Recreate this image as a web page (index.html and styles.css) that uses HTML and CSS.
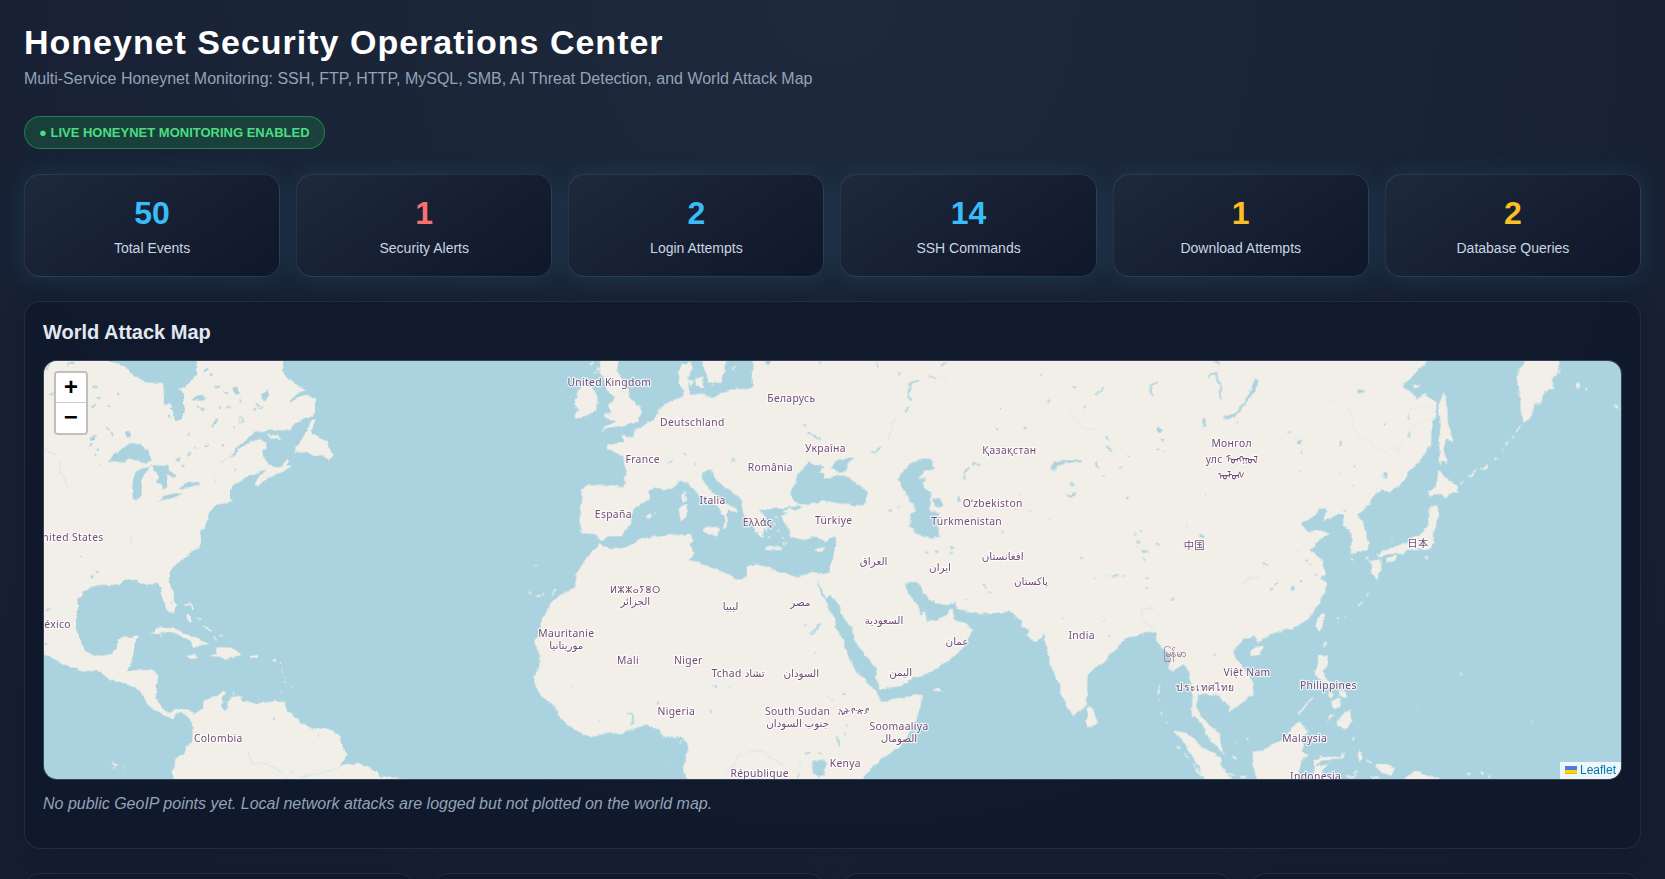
FILE: index.html
```html
<!DOCTYPE html>
<html lang="en">
<head>
<meta charset="utf-8">
<title>Honeynet Security Operations Center</title>
<link rel="stylesheet" href="styles.css">
</head>
<body>
<main class="page">
  <header class="masthead">
    <h1 class="title">Honeynet Security Operations Center</h1>
    <p class="subtitle">Multi-Service Honeynet Monitoring: SSH, FTP, HTTP, MySQL, SMB, AI Threat Detection, and World Attack Map</p>
    <div class="badge">● LIVE HONEYNET MONITORING ENABLED</div>
  </header>

  <section class="stats">
    <div class="card"><div class="value">50</div><div class="label">Total Events</div></div>
    <div class="card"><div class="value red">1</div><div class="label">Security Alerts</div></div>
    <div class="card"><div class="value">2</div><div class="label">Login Attempts</div></div>
    <div class="card"><div class="value">14</div><div class="label">SSH Commands</div></div>
    <div class="card"><div class="value amber">1</div><div class="label">Download Attempts</div></div>
    <div class="card"><div class="value amber">2</div><div class="label">Database Queries</div></div>
  </section>

  <section class="panel">
    <h2 class="panel-title">World Attack Map</h2>
    <div class="map">
      <svg class="world" viewBox="132 1083 4731 1254" preserveAspectRatio="xMidYMid slice" role="img" aria-label="World map">
        <defs>
          <filter id="coast" filterUnits="userSpaceOnUse" x="60" y="1020" width="4900" height="1400">
            <feTurbulence type="fractalNoise" baseFrequency="0.045" numOctaves="3" seed="4" result="n"/>
            <feDisplacementMap in="SourceGraphic" in2="n" scale="14" xChannelSelector="R" yChannelSelector="G"/>
          </filter>
        </defs>
        <g filter="url(#coast)">
          <!-- Americas -->
          <g transform="translate(0 1020)">
            <path class="land" d="M90,20 L318,20 L318,60 L345,68 L378,80 L400,105 L440,127 L490,132 L492,190 L510,205 L530,243 L545,238 L555,212 L548,160 L540,148 L570,130 L588,105 L590,20 L848,20 L850,95 L868,122 L918,150 L895,158 L870,182 L925,165 L945,180 L945,215 L930,232 L895,245 L870,270 L800,272 L762,275 L745,295 L715,320 L690,352 L735,318 L760,302 L785,297 L800,310 L795,325 L788,330 L795,360 L805,375 L830,382 L848,378 L855,360 L865,358 L862,375 L875,378 L850,395 L800,415 L778,438 L768,432 L772,410 L790,398 L795,385 L775,400 L725,420 L700,435 L690,450 L690,475 L700,483 L670,490 L640,500 L632,510 L625,540 L612,562 L600,572 L603,600 L598,625 L570,640 L550,655 L520,680 L507,700 L508,725 L522,770 L528,795 L522,820 L512,818 L492,795 L487,770 L483,745 L465,728 L440,735 L410,720 L370,722 L360,735 L300,735 L275,740 L250,758 L235,775 L237,800 L228,820 L228,870 L240,905 L260,935 L285,950 L335,942 L350,925 L353,900 L375,890 L413,890 L402,930 L395,965 L380,992 L450,990 L475,1005 L470,1040 L468,1075 L490,1105 L510,1118 L545,1102 L575,1112 L583,1125 L605,1105 L608,1085 L635,1072 L655,1065 L668,1055 L680,1056 L665,1072 L668,1090 L685,1085 L690,1072 L715,1068 L732,1085 L770,1090 L840,1082 L858,1100 L862,1115 L895,1140 L930,1165 L985,1165 L1020,1190 L1025,1220 L1043,1245 L1020,1275 L1070,1270 L1095,1278 L1130,1295 L1140,1308 L1215,1318 L1215,1360 L530,1360 L518,1300 L530,1255 L550,1245 L560,1220 L577,1205 L578,1160 L562,1130 L545,1115 L525,1125 L520,1140 L505,1130 L480,1120 L440,1090 L432,1070 L400,1040 L330,1020 L290,988 L250,995 L190,972 L150,950 L90,935 Z"/>
            <path class="land" d="M883,335 L905,300 L922,262 L935,240 L948,237 L935,270 L940,285 L980,300 L985,320 L998,345 L985,362 L970,345 L940,350 L930,340 Z M795,280 L830,288 L842,300 L820,297 Z M452,882 L470,865 L500,860 L530,868 L575,890 L628,912 L580,920 L570,905 L540,885 L500,875 Z M625,948 L655,940 L645,922 L690,922 L728,942 L715,950 L678,957 L660,950 Z M560,948 L578,945 L595,953 L575,957 Z M750,946 L775,946 L773,953 L750,953 Z M495,192 L510,190 L518,202 L505,203 Z M845,1084 L855,1082 L853,1092 L843,1092 Z M558,825 L566,822 L572,842 L566,846 Z M477,884 L485,882 L485,890 L477,890 Z"/>
            <path class="speck land-line" d="M550,795 l22,-3 8,14 M590,830 l10,10 M612,855 l20,18 M640,890 l10,8 M660,883 l12,4 M820,960 l8,4 M838,968 l2,3 M842,984 l4,4 M848,998 l2,2 M853,1012 l1,2 M854,1026 l-1,4 M845,1056 l1,2 M700,1060 l2,6 M722,1068 l4,2 M878,1038 l2,1 M335,1268 l18,10 M340,1282 l8,2 M368,1280 l3,1"/>
            <path class="water" d="M325,362 L370,322 L400,308 L422,312 L430,328 L445,332 L455,362 L440,368 L415,362 L385,355 L375,368 Z M405,400 L425,385 L452,382 L440,395 L425,420 L425,465 L410,484 L398,475 L396,435 Z M452,375 L500,378 L530,412 L515,412 L498,405 L502,440 L490,450 L485,430 L465,430 L478,410 L465,388 Z M475,485 L490,468 L520,460 L550,457 L520,475 Z M535,445 L555,430 L595,425 L595,438 L560,445 Z M378,275 L390,270 L393,290 L380,293 Z M668,1088 L682,1092 L683,1106 L673,1112 L666,1102 Z M784,160 L802,152 L812,166 L795,182 L782,172 Z M572,180 L600,164 L622,172 L600,182 Z M698,148 L716,142 L720,160 L704,164 Z M272,292 L288,288 L288,302 L274,306 Z"/>
            <path class="speck water-line" d="M150,70 l-12,18 M205,75 l18,-8 M150,160 l10,4 M165,120 l10,-5 M278,145 l14,-6 M290,170 l16,6 M325,195 l8,3 M350,160 l10,3 M275,200 l12,-6 M318,262 l10,8 M330,280 l6,4 M270,315 l10,0 M290,325 l6,4 M284,345 l5,4 M297,373 l2,2 M612,95 l14,-10 M630,100 l8,4 M645,140 l14,-4 M602,205 l12,3 M590,200 l8,3 M636,262 q5,-16 18,-22 M670,155 l14,4 M655,200 l8,2 M680,205 l10,-6 M716,180 l8,8 M770,190 l8,10 M760,210 l10,0 M780,205 l10,-4 M700,260 l4,3 M562,282 l8,4 M615,315 l8,2 M585,320 l6,4 M665,315 l6,3 M530,360 l10,-4 M560,345 l10,-8 M545,375 l8,6 M706,385 l2,6 M870,185 l30,-20 M515,785 l2,8 M820,1140 l8,-8 M955,1183 l3,3 M240,650 l6,2 M288,700 l8,-6 M275,714 l8,-4 M140,808 l14,0 M135,912 l8,0 M505,225 l6,5"/>
            <circle class="water-line" cx="724" cy="240" r="8"/>
            <path class="river" d="M132,325 L155,340 L168,338 M178,365 L184,400 L205,440 M650,377 L690,350 L715,322 M645,405 L646,430 M392,585 L394,610 M745,1235 L755,1270 L800,1272 L845,1295 L865,1318 M900,1312 L960,1300 L1010,1285 L1045,1255 M870,1290 l12,6"/>
          </g>
          <!-- Europe -->
          <g transform="translate(1560 1050)">
            <path class="land" d="M1320,-20 L705,-20 L698,60 L698,105 L680,118 L655,112 L620,125 L580,142 L550,130 L515,135 L505,105 L503,85 L515,60 L513,35 L485,42 L475,70 L475,100 L487,115 L488,140 L460,150 L430,160 L420,172 L415,190 L400,210 L365,225 L345,240 L340,258 L322,262 L306,256 L310,278 L290,280 L260,285 L262,300 L292,310 L310,325 L317,350 L315,395 L310,412 L250,407 L205,405 L182,418 L187,450 L178,510 L185,550 L225,552 L240,572 L265,562 L305,557 L325,530 L335,520 L330,500 L350,470 L390,450 L388,425 L405,412 L440,420 L465,410 L480,392 L505,398 L515,415 L545,440 L570,455 L595,475 L612,495 L617,515 L608,532 L615,534 L628,515 L618,492 L630,480 L652,490 L648,475 L615,460 L585,435 L560,405 L545,385 L548,365 L570,358 L580,380 L600,400 L640,430 L665,445 L672,490 L685,510 L700,530 L712,555 L730,562 L728,540 L745,535 L722,510 L738,500 L720,480 L745,475 L765,470 L790,475 L820,465 L790,484 L800,490 L785,500 L800,530 L815,560 L850,570 L880,558 L915,573 L945,558 L950,575 L940,620 L930,660 L960,680 L1320,680 Z"/>
            <path class="land" d="M240,10 L300,10 L290,60 L300,80 L325,115 L330,140 L345,165 L365,172 L360,195 L355,215 L320,225 L290,230 L265,232 L242,246 L265,222 L290,215 L260,205 L250,195 L270,190 L265,165 L278,155 L285,140 L265,125 L255,95 L240,70 Z M185,105 L215,110 L232,140 L232,180 L205,195 L170,205 L160,195 L178,180 L165,165 L170,130 Z M550,10 L622,10 L615,60 L605,95 L565,98 L560,70 L548,50 Z M525,85 L550,78 L548,112 L528,108 Z M505,92 L520,92 L518,106 L507,104 Z M475,470 L500,462 L500,500 L482,515 Z M483,435 L497,422 L498,450 L492,460 Z M550,535 L597,530 L592,560 L555,548 Z M376,500 L390,490 L396,500 L384,506 Z M738,588 L785,592 L780,600 L740,597 Z M887,598 L920,588 L905,605 L890,606 Z M574,100 L582,108 L576,110 Z M725,535 L745,548 L740,532 Z"/>
            <path class="speck land-line" d="M210,45 l10,-8 M222,70 l8,-6 M230,55 l8,6 M403,489 l6,2 M765,500 l8,3 M760,520 l6,4 M772,540 l8,4 M785,560 l6,4 M790,580 l6,6 M745,560 l6,4 M750,512 l6,-2 M800,577 l3,6 M640,60 l6,-14 M44,644 l4,1"/>
            <path class="water" d="M865,338 L835,370 L825,400 L808,430 L825,460 L870,465 L905,450 L960,460 L1010,468 L1045,455 L1047,430 L1020,405 L985,385 L955,372 L935,385 L915,385 L915,372 L895,362 L915,350 L890,345 Z M930,352 L945,335 L1005,320 L985,345 L985,358 L955,367 Z M802,470 L830,466 L848,470 L825,480 Z M735,30 L752,30 L748,44 L736,44 Z M1060,515 L1078,516 L1074,524 L1062,524 Z M1105,530 L1112,530 L1116,548 L1108,545 Z"/>
            <path class="speck water-line" d="M492,308 l8,4 M520,340 l8,3 M445,340 l10,-8 M632,332 l14,-6 M855,220 l2,8 M862,246 q20,10 40,25 M895,38 l8,1 M1072,36 l2,18 M1130,68 l14,4 M1105,270 l3,3 M1168,285 l4,4 M990,575 l5,4 M466,617 l20,0 M480,628 l14,0 M1070,610 l5,14 M1000,540 l8,-4"/>
          </g>
          <!-- Africa -->
          <g transform="translate(1560 1680)">
            <path class="land" d="M240,-50 L265,-37 L310,-35 L355,-60 L400,-72 L450,-75 L515,-78 L523,-60 L510,-50 L523,-20 L505,0 L530,5 L595,30 L625,45 L665,62 L680,50 L680,20 L710,10 L740,20 L770,35 L835,52 L870,40 L890,42 L892,60 L900,95 L925,140 L945,180 L950,210 L970,240 L985,290 L1005,330 L1040,365 L1070,395 L1085,425 L1130,415 L1208,402 L1205,440 L1170,510 L1140,560 L1080,600 L1025,657 L1015,700 L515,700 L488,625 L500,590 L505,550 L480,530 L435,532 L415,505 L370,495 L305,523 L265,518 L208,530 L165,510 L115,470 L105,440 L60,405 L50,380 L42,350 L62,310 L55,270 L45,245 L60,195 L80,150 L110,110 L165,85 L170,40 L195,0 L220,-30 Z"/>
            <path class="land" d="M870,38 L925,45 L950,-20 L1000,-20 L1000,150 L930,108 L915,112 L892,60 Z"/>
            <path class="speck land-line" d="M30,95 l2,8 M48,110 l12,-4 M66,105 l6,-2 M92,103 l12,-16 M448,602 l2,1 M482,548 l4,-6 M42,14 l5,1 M1242,388 l14,3"/>
            <path class="water" d="M880,605 L918,602 L915,640 L895,652 L878,640 Z M968,396 L977,397 L976,404 L967,403 Z"/>
            <path class="speck water-line" d="M950,530 l8,30 M858,582 l12,-10 M892,576 l14,4 M832,650 l5,-10 M838,612 l4,-4 M980,500 l4,-6 M975,520 l2,6 M580,381 l8,1 M626,382 l6,0 M570,452 l5,2 M922,408 l4,3 M935,420 l4,3 M870,222 l14,-12 10,-5 5,-15 M852,195 l8,1 M882,278 l6,2 M158,380 l3,1 M320,460 l18,6 2,24 -10,4 M238,483 l3,3 M413,426 l3,6 M940,38 l2,3"/>
            <path class="river" d="M612,645 L640,620 L655,585 L700,572 L725,572 L760,600 L790,612"/>
          </g>
          <!-- South Asia -->
          <g transform="translate(2460 1680)">
            <path class="land" d="M60,-120 L50,-60 L38,0 L30,35 L5,45 L25,100 L32,80 L30,106 L50,125 L72,175 L100,210 L105,245 L135,285 L165,320 L168,350 L178,390 L235,380 L280,355 L325,340 L380,305 L420,275 L440,245 L457,212 L440,190 L405,180 L397,145 L370,175 L320,184 L315,150 L305,165 L290,130 L265,100 L255,75 L275,65 L295,68 L310,100 L345,130 L385,135 L405,125 L412,150 L480,162 L570,155 L605,180 L610,205 L630,212 L615,222 L645,245 L665,235 L672,215 L678,260 L690,310 L715,370 L735,430 L758,467 L780,455 L800,430 L803,345 L820,325 L850,310 L890,265 L918,235 L960,225 L990,215 L1005,215 L1010,245 L1030,265 L1050,290 L1045,325 L1060,335 L1092,310 L1105,340 L1118,400 L1115,465 L1145,490 L1165,535 L1200,575 L1215,585 L1202,555 L1200,520 L1160,490 L1140,460 L1128,440 L1135,405 L1160,400 L1195,410 L1230,440 L1225,458 L1265,430 L1300,405 L1300,370 L1280,330 L1250,300 L1240,275 L1265,240 L1305,228 L1315,250 L1330,235 L1375,215 L1420,205 L1460,180 L1485,150 L1505,115 L1518,95 L1520,70 L1500,55 L1518,45 L1505,0 L1475,-30 L1400,-120 Z"/>
            <path class="land" d="M800,440 L820,450 L832,485 L815,503 L800,500 Z M1510,160 L1515,165 L1510,195 L1497,217 L1487,200 L1492,175 Z M1290,275 L1305,260 L1330,258 L1315,285 L1295,288 Z M1495,285 L1522,287 L1525,310 L1510,335 L1515,355 L1540,370 L1520,375 L1490,350 L1483,335 L1492,320 Z M1553,482 L1590,448 L1595,485 L1577,508 L1555,500 Z M1298,575 L1332,572 L1350,555 L1385,540 L1435,485 L1470,515 L1445,530 L1450,570 L1465,588 L1445,600 L1435,640 L1425,690 L1320,690 L1300,620 Z M1062,512 L1105,520 L1140,555 L1200,590 L1205,620 L1230,650 L1235,690 L1168,690 L1135,620 L1100,560 Z M1485,600 L1500,588 L1560,592 L1572,575 L1568,598 L1500,602 L1490,620 L1528,612 L1505,632 L1512,690 L1478,690 Z M1613,582 L1622,566 L1626,600 L1618,606 Z M1665,615 L1700,612 L1725,625 L1715,645 L1680,635 Z M1730,665 L1790,633 L1860,657 L1880,690 L1730,690 Z M1520,395 L1540,400 L1535,415 L1524,410 Z M1555,390 L1575,395 L1578,415 L1562,410 Z M1530,430 L1560,415 L1562,440 L1540,448 Z M1518,490 L1530,465 L1550,462 L1525,480 Z"/>
            <path class="speck land-line" d="M1436,460 l42,-45 M1020,375 l-2,25 M1016,420 l1,4 M1025,455 l3,8 M1035,485 l2,2 M1070,560 l10,6 M1095,580 l10,16 M1120,610 l6,14 M1130,628 l20,22 M1225,640 l18,6 M1260,650 l20,4 M1240,590 l10,8 M1280,538 l3,5 M1248,550 l2,2 M1615,140 l12,-14 M1640,108 l6,-8 M1550,178 l6,-1 M1572,170 l4,-1 M1515,245 l1,20 M1640,605 l14,2 M1655,650 l25,4 M1580,650 l28,-2 M1600,640 l14,-4 M1940,642 l12,0 M1985,635 l5,6 M2005,650 l5,3 M1600,530 l1,10 M1907,375 l1,1 M1920,345 l4,-3 M1792,441 l1,1 M1732,477 l1,1 M2134,487 l4,0 M350,390 l12,1 M308,150 l3,10"/>
            <path class="speck water-line" d="M492,72 l3,12 M508,100 l6,-1 M438,115 l3,1 M725,175 l4,-2 M850,180 l2,3 M862,228 l6,0 M825,55 l3,-1 M852,40 l14,3 M878,50 l16,-4 M905,48 l12,-2 M925,44 l16,2 M950,30 l10,4 M952,45 l6,-2 M975,53 l12,2 M978,85 l6,-1 M1052,122 l12,-8 M1350,90 l10,-4 M1365,78 l8,-6 M1412,80 l12,6 M1420,75 l-1,14 M1440,65 l5,3 M1485,42 l6,6 M1330,15 l10,4 M1184,283 l5,1"/>
            <path class="river" d="M1000,205 L968,180 L968,150 L1000,142 M1262,75 L1295,52 L1330,50"/>
          </g>
          <!-- North Asia and Japan -->
          <g transform="translate(3600 1050)">
            <path class="land" d="M-1000,-20 L690,-20 L680,33 L640,75 L605,112 L635,125 L650,148 L675,130 L708,155 L710,190 L695,220 L693,285 L660,330 L620,375 L600,405 L570,427 L545,418 L512,450 L510,465 L472,495 L485,515 L500,540 L505,580 L500,600 L470,605 L452,612 L455,565 L450,540 L428,530 L435,495 L410,495 L365,515 L380,485 L378,472 L360,475 L340,500 L305,515 L305,525 L330,548 L360,540 L387,550 L360,568 L330,600 L350,615 L375,665 L300,680 L-200,680 L-1000,610 Z"/>
            <path class="land" d="M975,-20 L975,33 L955,60 L952,100 L960,150 L970,218 L985,210 L1000,190 L1002,165 L1025,158 L1028,130 L1062,115 L1058,85 L1075,70 L1075,-20 Z M732,125 L738,150 L740,200 L760,275 L738,265 L730,300 L745,345 L728,330 L720,350 L718,290 L722,220 L715,165 Z M715,362 L745,390 L775,405 L770,425 L750,430 L740,445 L712,428 L690,440 L685,430 L708,410 L712,385 Z M692,465 L708,465 L718,495 L703,540 L700,580 L690,598 L660,595 L625,600 L600,612 L570,612 L530,620 L545,600 L590,590 L620,580 L640,560 L665,550 L685,525 L685,490 Z M558,625 L592,615 L585,632 L562,640 Z M510,630 L540,625 L543,650 L532,690 L515,675 Z M640,105 L655,102 L652,112 L640,114 Z M450,628 L462,628 L458,634 Z M1128,98 L1134,98 L1140,112 L1134,114 Z"/>
            <path class="speck land-line" d="M780,402 l15,-12 M805,380 l26,-18 M845,358 l18,-12 M885,328 l5,-4 M905,305 l3,-5 M920,285 l5,-8 M935,264 l4,-6 M948,242 l16,-14 M1078,62 l4,10 M1155,115 l8,4 M1242,168 l10,2 M1258,180 l2,1 M575,572 l2,2 M498,628 l6,-8 M680,620 l2,10"/>
            <path class="water" d="M165,85 L172,90 L165,125 L130,170 L100,202 L68,205 L110,185 L145,140 Z M8,208 L17,208 L14,230 L6,230 Z M292,270 L304,265 L302,282 L294,282 Z M550,366 L562,368 L560,384 L551,384 Z M472,122 L496,116 L484,132 L474,132 Z"/>
            <path class="speck water-line" d="M25,80 l10,-8 14,0 4,20 8,8 -2,35 5,15 M45,35 l15,10 M265,246 l8,1 M302,304 l4,2 M300,363 l4,1 M415,366 l4,2 M420,285 l4,-10 M458,350 l8,-1 M460,406 l4,3 M432,478 l3,4 M550,225 l8,-4 M626,190 l0,18 M624,262 l4,-14 M110,215 l3,1 M295,603 l2,2 M316,628 l6,6 M330,640 l3,3 M188,643 l14,1 M14,434 l3,1"/>
            <path class="river faint" d="M370,152 L405,150 L435,165 L450,190 L458,230 L480,262 L510,275 L535,305 L565,305 L605,280 L630,262 L635,235 L675,208 L705,200 M600,290 L590,315 M625,180 L680,165 L700,185"/>
          </g>
          <!-- Central Asia waters -->
          <g transform="translate(2460 1050)">
            <path class="water" d="M313,325 L340,332 L340,360 L310,365 L297,385 L318,388 L310,400 L318,420 L335,435 L330,480 L355,492 L350,520 L358,560 L325,565 L285,550 L270,530 L272,490 L290,480 L262,440 L245,410 L237,385 L255,355 L285,330 Z M340,445 L355,442 L370,465 L345,473 Z M412,438 L418,438 L423,452 L412,454 Z M690,355 L705,335 L730,330 L785,332 L785,340 L735,338 L715,345 L700,365 Z M738,435 L770,430 L765,438 L745,440 Z M1010,235 L1020,230 L1028,240 L1018,248 Z M1208,200 L1235,195 L1260,172 L1260,185 L1225,208 Z M1138,552 L1154,558 L1150,564 L1138,560 Z M824,338 L832,338 L838,354 L828,350 Z"/>
            <path class="speck water-line" d="M432,388 l4,-25 10,-12 M460,345 l8,-10 M470,342 l10,2 M172,36 l3,18 M232,68 l10,5 M275,152 l-12,-20 8,-30 26,-8 M330,82 l18,0 M362,48 l18,-12 M265,168 l-8,20 M155,308 l12,0 12,-20 M660,72 l5,2 M755,110 l14,4 M825,135 l30,-22 M680,152 l8,6 M792,165 l4,6 M540,178 l5,-5 M530,240 l1,-6 M610,236 l8,2 M860,260 l8,8 M855,292 l24,12 M922,320 l6,-2 M1020,268 l10,2 M1010,300 l4,-6 M1030,305 l2,-4 M990,110 l6,28 M990,108 l24,-15 M898,352 l5,1 M752,402 l16,1 M918,444 l8,2 M850,377 l4,1 M600,434 l3,0 M628,484 l6,0 M688,511 l3,1 M585,475 l4,2 M545,545 l4,1 M206,480 l6,4 M232,470 l4,2 M390,594 l12,1 M392,608 l6,1 M318,607 l6,1 M345,605 l8,0 M1100,527 l3,1 M942,552 l6,2 M960,544 l8,0 M945,575 l12,2 M952,590 l4,2 M965,603 l18,2 M1008,585 l12,-1 M970,630 l6,-1 M780,622 l8,3 M300,385 l15,-2"/>
            <path class="river" d="M225,200 l-8,40 -14,35"/>
            <path class="river faint" d="M745,180 L770,220 L795,235 L830,240 M350,82 L380,92 L390,115 M235,310 L252,332"/>
          </g>
        </g>
        <g class="places">
          <g transform="translate(0 1020)">
            <text x="207" y="602">United States</text><text x="158" y="864">México</text><text x="655" y="1206">Colombia</text>
          </g>
          <g transform="translate(1560 1050)">
            <text x="268" y="108">United Kingdom</text><text x="517" y="228">Deutschland</text><text x="814" y="157">Беларусь</text><text x="368" y="340">France</text><text x="916" y="305">Україна</text><text x="751" y="363">România</text><text x="578" y="462">Italia</text><text x="280" y="504">España</text><text x="712" y="528">Ελλάς</text><text x="941" y="523">Türkiye</text><text x="1061" y="645">العراق</text>
          </g>
          <g transform="translate(1560 1680)">
            <text class="small" x="346" y="99">ⵍⵣⵣⴰⵢⴻⵔ</text><text x="346" y="135">الجزائر</text><text x="632" y="150">ليبيا</text><text x="841" y="138">مصر</text><text x="139" y="232">Mauritanie</text><text x="139" y="267">موريتانيا</text><text x="324" y="312">Mali</text><text x="505" y="313">Niger</text><text x="654" y="351">Tchad تشاد</text><text x="844" y="352">السودان</text><text x="469" y="464">Nigeria</text><text x="833" y="465">South Sudan</text><text x="833" y="500">جنوب السودان</text><text class="small" x="1002" y="462">ኢትዮጵያ</text><text x="719" y="651">République</text><text x="976" y="621">Kenya</text>
          </g>
          <g transform="translate(2460 1050)">
            <text x="568" y="313">Қазақстан</text><text x="518" y="470">Oʻzbekiston</text><text x="440" y="524">Türkmenistan</text><text x="548" y="630">افغانستان</text><text x="1123" y="597">中国</text>
          </g>
          <g transform="translate(2460 1680)">
            <text x="360" y="33">ایران</text><text x="633" y="76">پاکستان</text><text x="192" y="192">السعودية</text><text x="411" y="256">عمان</text><text x="242" y="347">اليمن</text><text x="237" y="511">Soomaaliya</text><text x="237" y="546">الصومال</text><text x="785" y="237">India</text><text class="thin-halo" x="1065" y="292">မြန်မာ</text><text x="1281" y="347">Việt Nam</text><text x="1156" y="394">ประเทศไทย</text><text x="1525" y="388">Philippines</text><text x="1454" y="546">Malaysia</text><text x="1487" y="661">Indonesia</text>
          </g>
          <g transform="translate(3600 1050)">
            <text x="95" y="292">Монгол</text><text x="95" y="339">улс ᠮᠣᠩᠭᠣᠯ</text><text x="95" y="386">ᠤᠯᠤᠰ</text><text x="654" y="590">日本</text>
          </g>
        </g>
      </svg>
      <div class="zoom">
        <button type="button" aria-label="Zoom in">+</button>
        <button type="button" aria-label="Zoom out">−</button>
      </div>
      <div class="attribution">
        <a href="#leaflet"><svg class="flag" viewBox="0 0 12 8" aria-hidden="true"><path fill="#4c7be1" d="M0 0h12v4H0z"/><path fill="#ffd500" d="M0 4h12v3H0z"/><path fill="#e0bc00" d="M0 7h12v1H0z"/></svg> Leaflet</a>
      </div>
    </div>
    <p class="note">No public GeoIP points yet. Local network attacks are logged but not plotted on the world map.</p>
  </section>

  <section class="row">
    <div class="panel"></div><div class="panel"></div><div class="panel"></div><div class="panel"></div>
  </section>
</main>
</body>
</html>
```
FILE: styles.css
```css
* { box-sizing: border-box; }

body {
  margin: 0;
  background: radial-gradient(circle 2000px at top, #1e293b, #0f172a) #0f172a;
  color: #e2e8f0;
  font-family: "Liberation Sans", Arial, "Noto Sans CJK SC", sans-serif;
}

.page {
  display: flex;
  flex-direction: column;
  gap: 24px;
  height: 100vh;
  padding: 21px 24px 0;
  overflow: hidden;
}
.page > * { flex: none; }

.masthead {
  display: flex;
  flex-direction: column;
  align-items: flex-start;
  padding-bottom: 1px;
}
.title {
  margin: 0;
  color: #fff;
  font-size: 34px;
  line-height: 42px;
  letter-spacing: 1px;
}
.subtitle {
  margin: 6px 0 28px;
  color: #94a3b8;
  font-size: 16px;
  line-height: 19px;
}
.badge {
  padding: 8px 14px;
  border: 1px solid rgba(34, 197, 94, .5);
  border-radius: 999px;
  background: rgba(34, 197, 94, .18);
  color: #4ade80;
  font-size: 13px;
  font-weight: bold;
  line-height: 15px;
}

.stats {
  display: grid;
  grid-template-columns: repeat(6, 1fr);
  gap: 16px;
}
.card {
  padding: 20px 18px;
  border: 1px solid rgba(148, 163, 184, .18);
  border-radius: 16px;
  background: linear-gradient(145deg, #1e293b, #0f172a);
  box-shadow: 0 0 24px rgba(56, 189, 248, .12);
  text-align: center;
}
.value {
  color: #38bdf8;
  font-size: 32px;
  font-weight: bold;
  line-height: 37px;
}
.value.red { color: #f87171; }
.value.amber { color: #fbbf24; }
.label {
  margin-top: 8px;
  color: #cbd5e1;
  font-size: 14px;
  line-height: 16px;
}

.panel {
  padding: 18px;
  border: 1px solid rgba(148, 163, 184, .14);
  border-radius: 16px;
  background: rgba(15, 23, 42, .75);
  box-shadow: 0 0 24px rgba(0, 0, 0, .2);
}
.panel-title {
  margin: 0 0 16px;
  font-size: 20px;
  line-height: 24px;
}
.map {
  position: relative;
  height: 420px;
  overflow: hidden;
  border: 1px solid rgba(148, 163, 184, .3);
  border-radius: 14px;
  background: #aad3df;
  background-clip: padding-box;
}
.world {
  display: block;
  width: 100%;
  height: 100%;
}
.land { fill: #f2efe9; }
.water { fill: #aad3df; }
.land-line,
.water-line,
.river {
  fill: none;
  stroke: #aad3df;
  stroke-width: 3;
}
.speck { stroke-width: 5; }
.land-line { stroke: #f2efe9; }
.river { stroke-width: 2; opacity: .6; }
.river.faint { opacity: .3; }
.places text {
  fill: #704d74;
  stroke: rgba(255, 255, 255, .75);
  stroke-width: 7;
  stroke-linejoin: round;
  paint-order: stroke;
  font-family: "Noto Sans", "DejaVu Sans", "Noto Sans CJK JP", sans-serif;
  font-size: 31px;
  letter-spacing: 1px;
  text-anchor: middle;
}
.places .small { font-size: 28px; }
.places .thin-halo { stroke-width: 1; }

.zoom {
  position: absolute;
  top: 10px;
  left: 10px;
  display: flex;
  flex-direction: column;
  border: 2px solid rgba(0, 0, 0, .2);
  border-radius: 4px;
  background-clip: padding-box;
}
.zoom button {
  width: 30px;
  height: 30px;
  padding: 0;
  border: 0;
  border-radius: 0 0 2px 2px;
  background: #fff;
  color: #000;
  font: bold 24px/32px "Liberation Mono", monospace;
}
.zoom button:first-child {
  border-bottom: 1px solid #ccc;
  border-radius: 2px 2px 0 0;
}
.attribution {
  position: absolute;
  right: 0;
  bottom: 0;
  padding: 0 5px;
  background: rgba(255, 255, 255, .8);
  font-size: 12px;
  line-height: 17px;
}
.attribution a {
  color: #0078a8;
  text-decoration: none;
}
.flag {
  width: 12px;
  height: 8px;
}
.note {
  margin: 14px 0 16px;
  color: #94a3b8;
  font-size: 16px;
  font-style: italic;
  line-height: 20px;
}

.row {
  display: grid;
  grid-template-columns: repeat(4, 1fr);
  gap: 18px;
}
.row .panel { min-height: 320px; }
```
